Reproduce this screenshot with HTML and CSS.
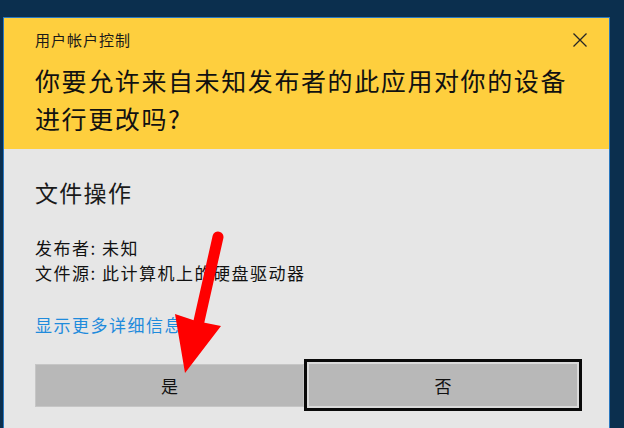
FILE: index.html
```html
<!DOCTYPE html>
<html lang="zh-CN">
<head>
<meta charset="utf-8">
<title>用户帐户控制</title>
<link rel="stylesheet" href="styles.css">
</head>
<body>
<div class="dialog">
  <div class="header">
    <div class="title-row">
      <span class="title">用户帐户控制</span>
      <svg class="close" width="14" height="14" viewBox="0 0 14 14"><path d="M0.5 0.5 L13.5 13.5 M13.5 0.5 L0.5 13.5" stroke="#262626" stroke-width="1.3" fill="none"/></svg>
    </div>
    <div class="heading">你要允许来自未知发布者的此应用对你的设备进行更改吗?</div>
  </div>
  <div class="body">
    <div class="op-title">文件操作</div>
    <div class="info">
      <div class="info-line">发布者: 未知</div>
      <div class="info-line">文件源: 此计算机上的硬盘驱动器</div>
    </div>
    <div class="link">显示更多详细信息</div>
    <div class="buttons">
      <div class="btn btn-yes">是</div>
      <div class="btn btn-no">否</div>
    </div>
  </div>
</div>
<svg class="arrow" width="624" height="428" viewBox="0 0 624 428">
  <line x1="218" y1="237" x2="197" y2="330" stroke="#ff0000" stroke-width="11" stroke-linecap="round"/>
  <polygon points="175,314 196,321 221,326 185,373" fill="#ff0000"/>
</svg>
</body>
</html>
```

FILE: styles.css
```css
html, body {
  margin: 0;
  padding: 0;
}
body {
  width: 624px;
  height: 428px;
  overflow: hidden;
  box-sizing: border-box;
  padding: 17px 0 0 3px;
  background: #0b2f4e;
  font-family: "Noto Sans CJK SC", "Noto Sans", sans-serif;
  color: #111;
  position: relative;
}
.dialog {
  width: 607px;
  height: 430px;
  box-sizing: border-box;
  border: 1px solid #2a78c0;
  background: #e6e6e6;
}
.header {
  background: #fecf3e;
  padding: 12px 22px 12px 31px;
}
.title-row {
  display: flex;
  justify-content: space-between;
  align-items: center;
  height: 20px;
}
.title {
  font-size: 15px;
  letter-spacing: 1px;
  line-height: 20px;
  color: #1a1a1a;
}
.close {
  display: block;
}
.heading {
  margin-top: 12px;
  font-size: 25px;
  letter-spacing: 1.6px;
  line-height: 37.5px;
  color: #111;
}
.body {
  padding: 28px 22px 0 31px;
}
.op-title {
  font-size: 23px;
  letter-spacing: 1.3px;
  line-height: 30px;
  color: #1a1a1a;
}
.info {
  margin-top: 28px;
}
.info-line {
  font-size: 17px;
  letter-spacing: 1.5px;
  line-height: 25px;
  color: #111;
}
.link {
  margin-top: 27px;
  font-size: 17px;
  letter-spacing: 1.5px;
  line-height: 25px;
  color: #1f8bdc;
}
.buttons {
  margin-top: 22px;
  display: flex;
  align-items: center;
}
.btn {
  box-sizing: border-box;
  display: flex;
  align-items: center;
  justify-content: center;
  font-size: 17px;
  color: #111;
  background: #b8b8b8;
}
.btn-yes {
  width: 269px;
  height: 43px;
  border: 1px solid #c6c6c6;
}
.btn-no {
  width: 278px;
  height: 52px;
  border: 3px solid #0a0a0a;
  box-shadow: inset 0 0 0 2px #dadada;
}
.arrow {
  position: absolute;
  left: 0;
  top: 0;
  pointer-events: none;
}
```
